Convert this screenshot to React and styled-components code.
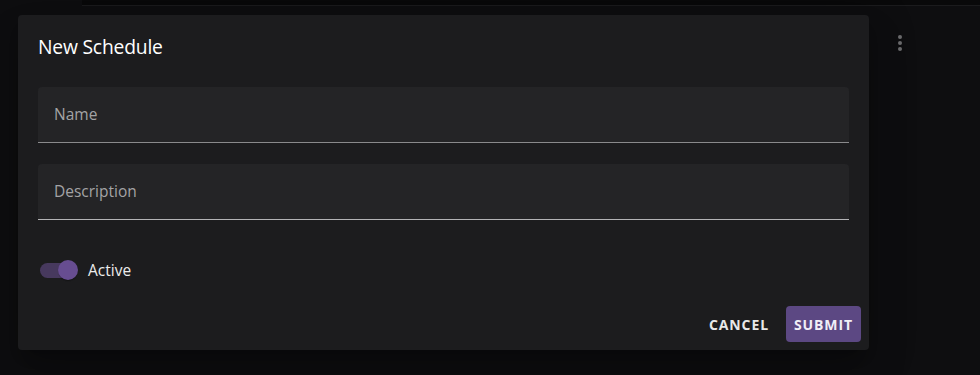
import React from "react";
import styled, { createGlobalStyle } from "styled-components";

const GlobalStyle = createGlobalStyle`
  html, body {
    margin: 0;
    padding: 0;
    background: #0e0e10;
    font-family: "Open Sans", "Noto Sans", sans-serif;
  }
`;

const Page = styled.div`
  position: relative;
  width: 980px;
  height: 375px;
  overflow: hidden;
  background: #0e0e10;
`;

const TopBar = styled.div`
  margin-left: 82px;
  height: 5px;
  background: #09090a;
  border-bottom: 1px solid #1b1b1d;
`;

const PageRow = styled.div`
  display: flex;
  justify-content: flex-end;
  padding: 29px 78px 0 0;
`;

const Kebab = styled.button`
  display: flex;
  flex-direction: column;
  gap: 2px;
  padding: 0;
  border: 0;
  background: none;
`;

const Dot = styled.span`
  width: 4px;
  height: 4px;
  border-radius: 50%;
  background: #6c6c6e;
`;

const Dialog = styled.div`
  position: absolute;
  left: 18px;
  top: 15px;
  width: 851px;
  height: 335px;
  box-sizing: border-box;
  display: flex;
  flex-direction: column;
  background: #1c1c1e;
  border-radius: 4px;
  box-shadow: 0 11px 15px -7px rgba(0, 0, 0, 0.2), 0 24px 38px 3px rgba(0, 0, 0, 0.14),
    0 9px 46px 8px rgba(0, 0, 0, 0.12);
`;

const Title = styled.h2`
  margin: 0;
  padding: 16px 20px;
  font-size: 19.3px;
  font-weight: 400;
  line-height: 32px;
  color: #ffffff;
  letter-spacing: -0.2px;
`;

const Content = styled.div`
  display: flex;
  flex-direction: column;
  gap: 21px;
  padding: 8px 20px 0;
`;

const Field = styled.div`
  height: 56px;
  box-sizing: border-box;
  display: flex;
  align-items: center;
  padding: 0 16px 1px;
  background: #242426;
  border-radius: 4px 4px 0 0;
  border-bottom: 1px solid ${(p) => p.$line};
`;

const Label = styled.span`
  font-size: 15.5px;
  color: #a3a3a5;
`;

const SwitchRow = styled.label`
  display: flex;
  align-items: center;
  height: 38px;
  margin-top: 31px;
  padding-left: 22px;
  gap: 12px;
`;

const Track = styled.span`
  position: relative;
  width: 36px;
  height: 15px;
  border-radius: 8px;
  background: #47395e;
`;

const Thumb = styled.span`
  position: absolute;
  right: -2px;
  top: -3px;
  width: 20px;
  height: 20px;
  border-radius: 50%;
  background: #674d91;
  box-shadow: 0 2px 1px -1px rgba(0, 0, 0, 0.2), 0 1px 1px rgba(0, 0, 0, 0.14);
`;

const SwitchText = styled.span`
  font-size: 15.5px;
  color: #ececec;
`;

const Actions = styled.div`
  margin-top: auto;
  display: flex;
  justify-content: flex-end;
  align-items: center;
  gap: 9px;
  padding: 8px;
`;

const Button = styled.button`
  height: 36px;
  padding: 0 8px;
  border: 0;
  border-radius: 4px;
  font-family: inherit;
  font-size: 14px;
  font-weight: 700;
  letter-spacing: 0.9px;
  text-transform: uppercase;
  color: ${(p) => (p.$primary ? "#f1eef7" : "#e8e8e8")};
  background: ${(p) => (p.$primary ? "#5c4883" : "transparent")};
`;

export default function App() {
  return (
    <Page>
      <GlobalStyle />
      <TopBar />
      <PageRow>
        <Kebab aria-label="more">
          <Dot />
          <Dot />
          <Dot />
        </Kebab>
      </PageRow>
      <Dialog>
        <Title>New Schedule</Title>
        <Content>
          <Field $line="#8a8a8c">
            <Label>Name</Label>
          </Field>
          <Field $line="#b4b4b6">
            <Label>Description</Label>
          </Field>
        </Content>
        <SwitchRow>
          <Track>
            <Thumb />
          </Track>
          <SwitchText>Active</SwitchText>
        </SwitchRow>
        <Actions>
          <Button>Cancel</Button>
          <Button $primary>Submit</Button>
        </Actions>
      </Dialog>
    </Page>
  );
}
